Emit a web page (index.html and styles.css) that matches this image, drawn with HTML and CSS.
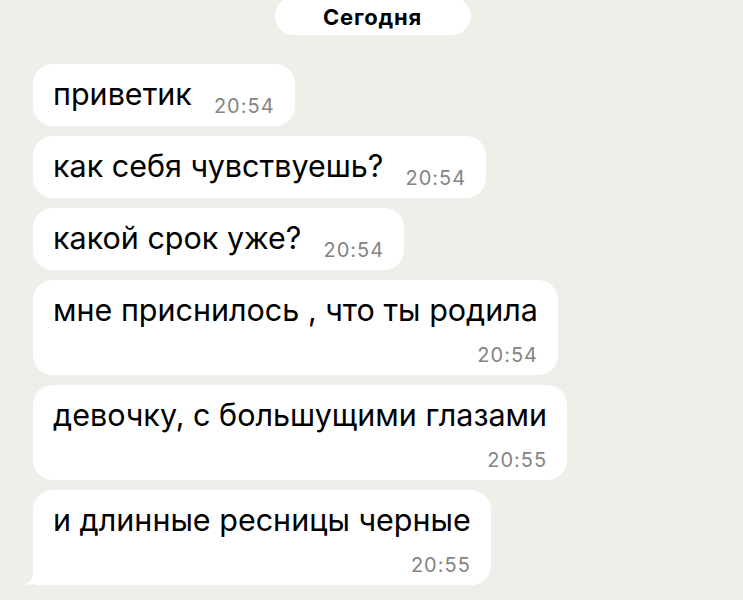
FILE: index.html
```html
<!DOCTYPE html>
<html lang="ru">
<head>
    <meta charset="UTF-8">
    <meta name="viewport" content="width=device-width, initial-scale=1.0">
    <title>Чат</title>
    <link rel="stylesheet" href="styles.css">
</head>
<body>

    <div class="chat">
        <div class="date-row">
            <span class="date-pill">Сегодня</span>
        </div>

        <div class="msg">
            <span class="text">приветик</span>
            <span class="time">20:54</span>
        </div>
        <div class="msg">
            <span class="text">как себя чувствуешь?</span>
            <span class="time">20:54</span>
        </div>
        <div class="msg">
            <span class="text">какой срок уже?</span>
            <span class="time">20:54</span>
        </div>
        <div class="msg msg-wrap">
            <span class="text">мне приснилось , что ты родила</span>
            <span class="time">20:54</span>
        </div>
        <div class="msg msg-wrap">
            <span class="text">девочку, с большущими глазами</span>
            <span class="time">20:55</span>
        </div>
        <div class="msg msg-wrap msg-last">
            <span class="text">и длинные ресницы черные</span>
            <span class="time">20:55</span>
            <svg class="tail" width="16" height="20" viewBox="0 0 16 20">
                <path d="M8 0 L8 8 C8 13 5 17 0 19.5 C5 20.5 10 19 13 17 C14 18.5 15 19.5 16 20 L16 0 Z" fill="#ffffff"/>
            </svg>
        </div>
    </div>

</body>
</html>
```

FILE: styles.css
```css
body {
    margin: 0;
    background-color: #f0eee9;
    font-family: Inter, "Noto Sans", sans-serif;
    color: #000000;
}
.chat {
    display: flex;
    flex-direction: column;
    align-items: flex-start;
    gap: 10px;
    padding: 0 0 0 33px;
}
.date-row {
    align-self: stretch;
    display: flex;
    justify-content: center;
    padding: 0 0 19px 0;
    margin-left: -33px;
}
.date-pill {
    background-color: #ffffff;
    border-radius: 19px;
    width: 196px;
    height: 38px;
    margin-top: -3px;
    padding-top: 2px;
    box-sizing: border-box;
    display: flex;
    align-items: center;
    justify-content: center;
    font-size: 22px;
    font-weight: 700;
    letter-spacing: 0.8px;
    margin-left: 2px;
}
.msg {
    position: relative;
    background-color: #ffffff;
    border-radius: 20px;
    display: flex;
    align-items: flex-end;
    gap: 22px;
    padding: 13px 20px 9px 20px;
}
.text {
    font-size: 30.5px;
    line-height: 34px;
    margin-bottom: 6px;
}
.time {
    font-size: 20px;
    line-height: 22px;
    letter-spacing: 1px;
    color: #848484;
}
.msg-wrap {
    flex-direction: column;
    gap: 17px;
}
.msg-wrap .text {
    margin-bottom: 0;
}
.msg-last {
    border-bottom-left-radius: 4px;
}
.tail {
    position: absolute;
    left: -8px;
    bottom: 0;
}
```
